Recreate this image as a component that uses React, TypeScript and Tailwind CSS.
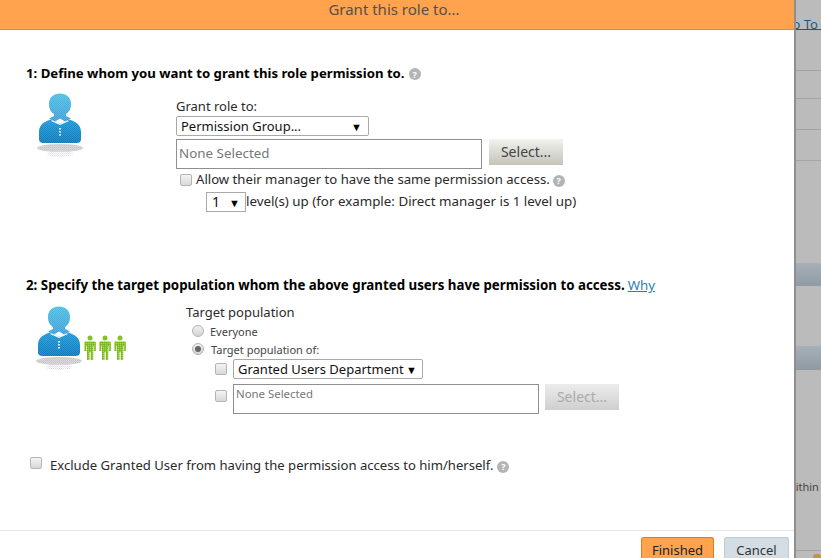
function Help() {
  return (
    <span className="inline-flex h-3 w-3 shrink-0 items-center justify-center rounded-full bg-[#b4b4b4] text-[9px] leading-none font-bold text-white">?</span>
  );
}

function Check({ className = "" }: { className?: string }) {
  return <span className={`block h-3 w-3 shrink-0 rounded-[2px] border border-[#b4b4b4] bg-gradient-to-b from-[#f4f4f4] to-[#d8d8d8] ${className}`} />;
}

function Radio({ on = false }: { on?: boolean }) {
  return (
    <span className="flex h-3 w-3 shrink-0 items-center justify-center rounded-full border border-[#b4b4b4] bg-gradient-to-b from-[#f0f0f0] to-[#d4d4d4]">
      {on && <span className="block h-[6px] w-[6px] rounded-full bg-[#666]" />}
    </span>
  );
}

function Drop({ label, className }: { label: string; className: string }) {
  return (
    <div className={`flex items-center justify-between rounded-[2px] border border-[#a9a9a9] bg-white text-[#111] ${className}`}>
      <span className="whitespace-nowrap">{label}</span>
      <span className="text-[11px] leading-none text-black">▼</span>
    </div>
  );
}

const headPath = "M19 13C19 6 24 2.500 30 2.500s11 3.500 11 10.500c0 5-2 8-5 10v2l5 2.500-6 3-5-3-5 3-6-3 5-2.500v-2c-3-2-5-5-5-10z";
const bodyPath = "M9 41c0-8 6-11 14-13l7 5 7-5c8 2 14 5 14 13v7c0 3-2 4-5 4H14c-3 0-5-1-5-4z";
const greenPath = "M1.500 6.500h9c.8 0 1.300.5 1.300 1.300V16h-2v-5h-.6v14H6.700v-8H5.500v8H3V11h-.6v5h-2V7.800c0-.8.4-1.300 1.100-1.300z";

function Person() {
  return (
    <g>
      <ellipse cx="30" cy="57" rx="23" ry="4" fill="url(#shadowDots)" />
      <ellipse cx="30" cy="63" rx="13" ry="3" fill="url(#paleDots)" />
      <path d={bodyPath} fill="url(#body)" />
      <path d={bodyPath} fill="url(#dither)" />
      <path d="M24 28l6 5 6-5 3 2-9 4-9-4z" fill="#eef8fc" />
      <path d={headPath} fill="url(#head)" />
      <path d={headPath} fill="url(#dither)" />
      <rect x="29" y="37" width="2" height="1.600" fill="#cfeaf7" />
      <rect x="29" y="40" width="2" height="1.600" fill="#cfeaf7" />
      <rect x="29" y="43" width="2" height="1.600" fill="#cfeaf7" />
    </g>
  );
}

function Defs() {
  return (
    <defs>
      <linearGradient id="head" x1="0" y1="0" x2="0" y2="1">
        <stop offset="0" stopColor="#4cc0e4" />
        <stop offset="1" stopColor="#3f9fd8" />
      </linearGradient>
      <linearGradient id="body" x1="0" y1="0" x2="0" y2="1">
        <stop offset="0" stopColor="#1a9ad6" />
        <stop offset="1" stopColor="#0a79bf" />
      </linearGradient>
      <pattern id="dither" width="2" height="2" patternUnits="userSpaceOnUse">
        <rect x="0" y="0" width="1" height="1" fill="#ffffff" fillOpacity="0.14" />
        <rect x="1" y="1" width="1" height="1" fill="#ffffff" fillOpacity="0.14" />
      </pattern>
      <pattern id="shadowDots" width="2" height="2" patternUnits="userSpaceOnUse">
        <rect width="2" height="2" fill="#dcd8dc" />
        <rect x="0" y="0" width="1" height="1" fill="#c2c2c2" />
        <rect x="1" y="1" width="1" height="1" fill="#cccccc" />
      </pattern>
      <pattern id="paleDots" width="2" height="2" patternUnits="userSpaceOnUse">
        <rect x="0" y="0" width="1" height="1" fill="#d9dfe8" />
        <rect x="1" y="1" width="1" height="1" fill="#ece8ee" />
      </pattern>
      <pattern id="greenDots" width="2" height="2" patternUnits="userSpaceOnUse">
        <rect x="0" y="0" width="1" height="1" fill="#ffffff" fillOpacity="0.25" />
        <rect x="1" y="1" width="1" height="1" fill="#4f8f10" fillOpacity="0.25" />
      </pattern>
    </defs>
  );
}

function Green({ x }: { x: number }) {
  return (
    <g transform={`translate(${x} 0)`}>
      <circle cx="6" cy="3" r="2.500" fill="#84c225" />
      <path d={greenPath} fill="#84c225" />
      <path d={greenPath} fill="url(#greenDots)" />
    </g>
  );
}

function Strip() {
  return (
    <div className="flex w-[27px] shrink-0 flex-col overflow-hidden border-l-2 border-[#8f8f8f] bg-[#bbbbbb] text-[13px] text-[#333]">
      <div className="flex h-[30px] items-start justify-end overflow-hidden border-b border-[#1c5a80] pt-[18px] pr-[3px] whitespace-nowrap text-[#1c5a80]">Go To</div>
      <div className="h-[41px] border-b border-[#a4a4a4]" />
      <div className="h-[28px] border-b border-[#a4a4a4]" />
      <div className="h-[31px] border-b border-[#a4a4a4]" />
      <div className="h-[31px] border-b border-[#a4a4a4]" />
      <div className="h-[102px]" />
      <div className="h-[24px] bg-gradient-to-b from-[#a8b0b6] to-[#8f9aa4]" />
      <div className="h-[60px]" />
      <div className="h-[24px] bg-gradient-to-b from-[#a8b0b6] to-[#8f9aa4]" />
      <div className="flex h-[122px] items-end overflow-hidden text-[11px] whitespace-nowrap text-[#4a4440]">
        <span className="ml-[-9px]">within the</span>
      </div>
      <div className="mt-[58px] h-[8px] border-t border-[#a4a4a4]">
        <div className="mt-[3px] ml-[17px] h-[6px] rounded-t-[3px] bg-[#c98d4c]" />
      </div>
    </div>
  );
}

export default function App() {
  return (
    <div className="flex h-[558px] w-[821px] overflow-hidden bg-[#bbbbbb] font-['Noto_Sans','Open_Sans',sans-serif] text-[13px] leading-none text-[#2a2a2a]">
      <div className="flex w-[794px] shrink-0 flex-col bg-white">
        <div className="flex h-[30px] shrink-0 items-start justify-center border-b border-[#9a9a9a] bg-[#ffa34f] pt-[1px] pr-[6px] text-[15px] leading-[16px] text-[#555047]">
          Grant this role to...
        </div>

        <div className="flex h-[500px] shrink-0 flex-col pt-[36px]">
          <div className="flex h-[16px] items-center gap-[4px] pl-[26px] text-[13.2px] font-bold text-black">
            <span className="whitespace-nowrap">1: Define whom you want to grant this role permission to.</span>
            <Help />
          </div>

          <div className="flex h-[187px] pt-[1px]">
            <svg width="60" height="70" viewBox="0 0 60 70" className="mt-[8px] ml-[30px] shrink-0">
              <Defs />
              <Person />
            </svg>
            <div className="ml-[86px] flex flex-col">
              <div className="flex h-[33px] items-end pb-[3px]">Grant role to:</div>
              <Drop label="Permission Group..." className="h-[20px] w-[193px] pr-[6px] pl-[4px] text-[13px]" />
              <div className="mt-[3px] flex">
                <div className="flex h-[30px] w-[306px] items-center border border-[#8f8f8f] pl-[2px] text-[13.4px] text-[#777]">None Selected</div>
                <div className="ml-[7px] flex h-[26px] w-[74px] items-center justify-center bg-gradient-to-b from-[#f2f2ef] to-[#c4c4ba] text-[14px] text-[#444]">Select...</div>
              </div>
              <div className="mt-[3px] flex h-[16px] items-center pl-[4px] text-[13.15px]">
                <Check />
                <span className="ml-[4px] whitespace-nowrap">Allow their manager to have the same permission access.</span>
                <span className="ml-[3px]"><Help /></span>
              </div>
              <div className="mt-[4px] flex items-center pl-[30px] text-[13.35px]">
                <Drop label="1" className="h-[20px] w-[40px] rounded-none pr-[5px] pl-[5px] text-[14px]" />
                <span className="whitespace-nowrap">level(s) up (for example: Direct manager is 1 level up)</span>
              </div>
            </div>
          </div>

          <div className="mt-[9px] flex h-[16px] items-center pl-[26px] text-[13.3px] font-bold text-black">
            <span className="whitespace-nowrap">2: Specify the target population whom the above granted users have permission to access.</span>
            <span className="ml-[3px] font-normal text-[#2d7fb0] underline">Why</span>
          </div>

          <div className="flex h-[163px]">
            <svg width="100" height="70" viewBox="0 0 100 70" className="mt-[10px] ml-[29px] shrink-0">
              <Defs />
              <Person />
              <g transform="translate(55 31)">
                <Green x="0" />
                <Green x="15" />
                <Green x="30" />
              </g>
            </svg>
            <div className="ml-[57px] flex flex-col">
              <div className="mt-[10px] flex h-[16px] items-center text-[13px]">Target population</div>
              <div className="mt-[5px] flex h-[12px] items-center pl-[6px] text-[11px] text-[#444]">
                <Radio />
                <span className="ml-[6px]">Everyone</span>
              </div>
              <div className="mt-[6px] flex h-[12px] items-center pl-[6px] text-[11px] text-[#444]">
                <Radio on />
                <span className="ml-[7px]">Target population of:</span>
              </div>
              <div className="mt-[4px] flex items-center pl-[29px]">
                <Check />
                <Drop label="Granted Users Department" className="ml-[6px] h-[20px] w-[190px] pr-[5px] pl-[4px] text-[13px]" />
              </div>
              <div className="mt-[5px] flex pl-[29px]">
                <Check className="mt-[6px]" />
                <div className="ml-[6px] h-[30px] w-[306px] border border-[#8f8f8f] pt-[3px] pl-[2px] text-[11.4px] text-[#777]">None Selected</div>
                <div className="ml-[6px] flex h-[26px] w-[74px] items-center justify-center bg-gradient-to-b from-[#ececec] to-[#cfcfcf] text-[14px] text-[#aaa]">Select...</div>
              </div>
            </div>
          </div>

          <div className="flex items-start pl-[30px] text-[13.1px]">
            <Check />
            <span className="mt-[2px] ml-[8px] flex items-center whitespace-nowrap">
              Exclude Granted User from having the permission access to him/herself.
              <span className="ml-[4px]"><Help /></span>
            </span>
          </div>
        </div>

        <div className="flex min-h-0 flex-1 justify-end gap-[10px] border-t border-[#e6e6e6] pt-[6px] pr-[5px]">
          <div className="flex h-[24px] w-[73px] items-center justify-center rounded-t-[3px] border border-b-0 border-[#e07a1f] bg-[#ffa34f] pt-[2px] text-[#222]">Finished</div>
          <div className="flex h-[24px] w-[65px] items-center justify-center rounded-t-[3px] border border-b-0 border-[#c0ccd4] bg-[#d3dde3] pt-[2px] text-[#333]">Cancel</div>
        </div>
      </div>
      <Strip />
    </div>
  );
}
